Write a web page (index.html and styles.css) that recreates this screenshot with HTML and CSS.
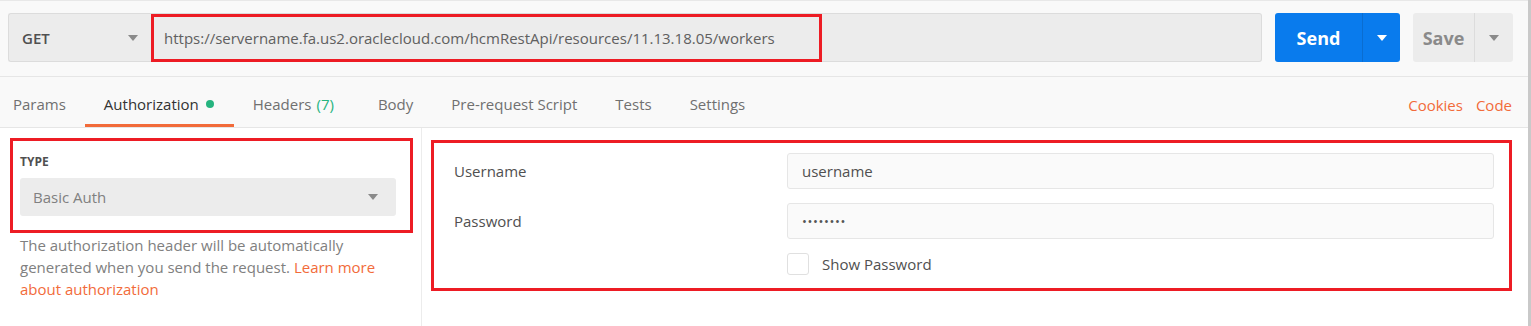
FILE: index.html
```html
<!DOCTYPE html>
<html lang="en">
<head>
    <meta charset="UTF-8" />
    <title>Request - Basic Auth</title>
    <link rel="stylesheet" href="styles.css">
</head>
<body>
    <div class="window">
        <div class="main">
            <div class="request-bar">
                <div class="url-group">
                    <div class="method">GET <span class="caret"></span></div>
                    <div class="url">
                        <span class="mark url-mark">https://servername.fa.us2.oraclecloud.com/hcmRestApi/resources/11.13.18.05/workers</span>
                    </div>
                </div>
                <div class="split-btn send">
                    <span class="btn-label">Send</span>
                    <span class="btn-drop"><span class="caret"></span></span>
                </div>
                <div class="split-btn save">
                    <span class="btn-label">Save</span>
                    <span class="btn-drop"><span class="caret"></span></span>
                </div>
            </div>

            <div class="tabs">
                <div class="tab first">Params</div>
                <div class="tab active">Authorization <span class="dot"></span></div>
                <div class="tab">Headers <span class="count">(7)</span></div>
                <div class="tab">Body</div>
                <div class="tab">Pre-request Script</div>
                <div class="tab">Tests</div>
                <div class="tab">Settings</div>
                <div class="tab-links">
                    <span>Cookies</span>
                    <span>Code</span>
                </div>
            </div>

            <div class="auth">
                <div class="auth-side">
                    <div class="mark type-box">
                        <div class="type-label">TYPE</div>
                        <div class="type-select">Basic Auth <span class="caret"></span></div>
                    </div>
                    <p class="help">The authorization header will be automatically generated when you send the request. <span class="link">Learn more about authorization</span></p>
                </div>
                <div class="auth-body">
                    <div class="mark fields">
                        <div class="field-label">Username</div>
                        <div class="field-input">username</div>
                        <div class="field-label">Password</div>
                        <div class="field-input secret">&bull;&bull;&bull;&bull;&bull;&bull;&bull;&bull;</div>
                        <div></div>
                        <div class="show-pass"><span class="checkbox"></span> Show Password</div>
                    </div>
                </div>
            </div>
        </div>
        <div class="edge"></div>
    </div>
</body>
</html>
```

FILE: styles.css
```css
body {
    margin: 0;
    font-family: 'Open Sans', 'Noto Sans', sans-serif;
    font-size: 15px;
    color: #505050;
    background: #fff;
}
.window {
    display: flex;
    height: 326px;
}
.main {
    flex: 1;
    display: flex;
    flex-direction: column;
}
.edge {
    width: 3px;
    background-color: #c9c9c9;
}

/* annotation boxes */
.mark {
    border: 3px solid #ed1c24;
    box-sizing: border-box;
}

.caret {
    display: inline-block;
    width: 0;
    height: 0;
    border-left: 5px solid transparent;
    border-right: 5px solid transparent;
    border-top: 6px solid #8a8a8a;
}

/* request bar */
.request-bar {
    display: flex;
    align-items: flex-start;
    gap: 13px;
    height: 63px;
    padding: 12px 15px 0 8px;
    border-top: 1px solid #e8e8e8;
    border-bottom: 1px solid #e6e6e6;
    background-color: #f9f9f9;
}
.url-group {
    flex: 1;
    display: flex;
    height: 49px;
}
.method {
    width: 144px;
    box-sizing: border-box;
    display: flex;
    align-items: center;
    justify-content: space-between;
    padding: 0 14px 0 13px;
    font-weight: 600;
    color: #505050;
    background-color: #ececec;
    border: 1px solid #dcdcdc;
    border-right: none;
    border-radius: 3px 0 0 3px;
}
.url {
    flex: 1;
    display: flex;
    align-items: center;
    background-color: #ececec;
    border: 1px solid #dcdcdc;
    border-left: none;
    border-radius: 0 3px 3px 0;
}
.url-mark {
    display: flex;
    align-items: center;
    width: 671px;
    height: 48px;
    margin-left: -1px;
    padding-left: 10px;
    color: #606060;
}
.split-btn {
    display: flex;
    height: 49px;
    border-radius: 3px;
    font-size: 18px;
    font-weight: 700;
}
.btn-label,
.btn-drop {
    display: flex;
    align-items: center;
    justify-content: center;
}
.send {
    background-color: #097bed;
    color: #fff;
}
.send .btn-label {
    width: 87px;
    border-right: 1px solid #0a6dd0;
}
.send .btn-drop {
    width: 37px;
}
.send .caret {
    border-top-color: #fff;
}
.save {
    background-color: #ececec;
    color: #8a8a8a;
}
.save .btn-label {
    width: 61px;
    border-right: 1px solid #dcdcdc;
}
.save .btn-drop {
    width: 38px;
}

/* tabs */
.tabs {
    display: flex;
    align-items: stretch;
    height: 50px;
    border-bottom: 1px solid #e6e6e6;
    background-color: #f9f9f9;
}
.tab {
    display: flex;
    align-items: center;
    padding: 6px 19px 0;
    color: #707070;
    border-bottom: 3px solid transparent;
}
.tab.first {
    padding-left: 13px;
}
.tab.active {
    color: #333;
    border-bottom-color: #f26b3a;
}
.dot {
    display: inline-block;
    width: 8px;
    height: 8px;
    margin-left: 7px;
    margin-right: 1px;
    border-radius: 50%;
    background-color: #26b47f;
}
.count {
    margin-left: 5px;
    margin-right: 6px;
    color: #26b47f;
}
.tab-links {
    margin-left: auto;
    display: flex;
    align-items: center;
    gap: 13px;
    padding: 6px 16px 0 0;
    color: #f26b3a;
}

/* auth panel */
.auth {
    flex: 1;
    display: flex;
}
.auth-side {
    width: 422px;
    border-right: 1px solid #ececec;
    padding: 10px 8px 0 10px;
    box-sizing: border-box;
}
.type-box {
    padding: 13px 14px 14px 7px;
}
.type-label {
    font-size: 12px;
    font-weight: 700;
    line-height: 16px;
    margin-bottom: 8px;
    color: #505050;
}
.type-select {
    display: flex;
    align-items: center;
    justify-content: space-between;
    height: 38px;
    padding: 0 18px 0 13px;
    border-radius: 3px;
    background-color: #ececec;
    color: #808080;
}
.help {
    margin: 1px 0 0 10px;
    width: 380px;
    line-height: 22px;
    color: #808080;
}
.link {
    color: #f26b3a;
}
.auth-body {
    flex: 1;
    padding: 12px 16px 0 9px;
}
.fields {
    display: grid;
    grid-template-columns: 333px 1fr;
    align-items: center;
    row-gap: 14px;
    padding: 10px 15px 13px 20px;
}
.field-input {
    display: flex;
    align-items: center;
    height: 36px;
    box-sizing: border-box;
    padding-left: 14px;
    background-color: #fafafa;
    border: 1px solid #e6e6e6;
    border-radius: 3px;
}
.secret {
    font-size: 13px;
    letter-spacing: 0.6px;
    color: #555;
}
.show-pass {
    display: flex;
    align-items: center;
    gap: 13px;
    height: 22px;
}
.checkbox {
    width: 22px;
    height: 22px;
    box-sizing: border-box;
    border: 1px solid #e0e0e0;
    border-radius: 3px;
    background-color: #fff;
}
```
